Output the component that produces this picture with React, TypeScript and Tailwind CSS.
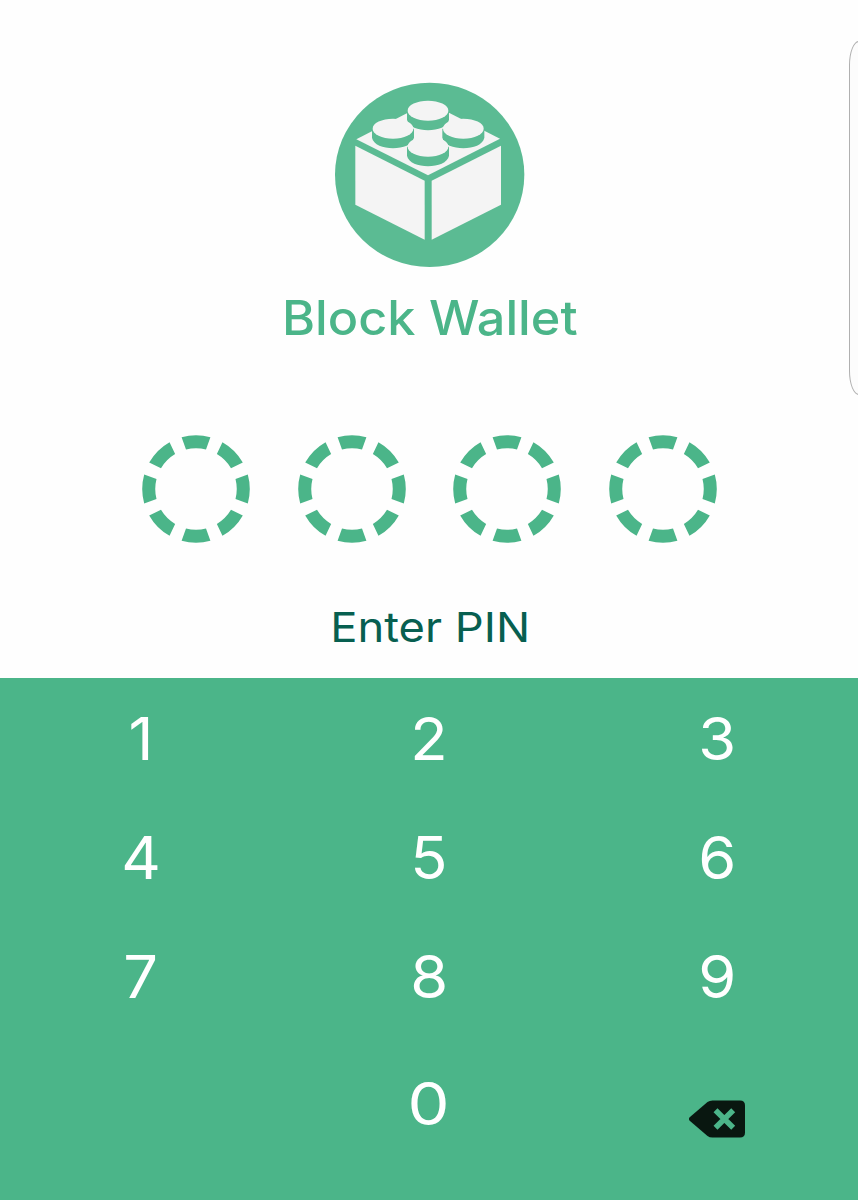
import type { ReactNode } from "react";

const PIN_LENGTH = 4;
const DASH_ANGLES = [0, 45, 90, 135, 180, 225, 270, 315];

/** Brick logo: 2x2 studs on a block, inside a green disc. */
function BrickLogo() {
  const studs = [
    { x: 309, y: 107 },
    { x: 204, y: 161 },
    { x: 415, y: 161 },
    { x: 309, y: 215 },
  ];
  return (
    <svg viewBox="0 0 630 600" className="ml-0.5 h-[200px] w-[210px]" role="img" aria-label="Block Wallet logo">
      <ellipse cx="314" cy="299.5" rx="284" ry="276.5" fill="#5bbb93" />
      <g fill="#f4f4f4">
        <path d="M310 82 L525 191 L309 301 L94 193Z" />
        <path d="M91 212 L299 317 V494 L91 389Z" />
        <path d="M528 212 L320 317 V494 L528 389Z" />
      </g>
      {studs.map(({ x, y }) => (
        <g key={`${x}-${y}`} transform={`translate(${x} ${y})`}>
          <path d="M-63 0 V27 C-55 69 55 69 63 27 V0Z" fill="#5bbb93" />
          <ellipse rx="61" ry="30" fill="#f4f4f4" />
        </g>
      ))}
      {/* top face shows between the back and front studs */}
      <path d="M267 168 Q309 178 351 168 V190 Q358 206 370 215 H248 Q262 206 267 190Z" fill="#f4f4f4" />
    </svg>
  );
}

function PinSlot() {
  return (
    <svg viewBox="-54 -54 108 108" className="size-[108px]" fill="#4bb589" aria-hidden>
      {DASH_ANGLES.map((angle) => (
        <path
          key={angle}
          d="M-14.4 -51.8 A53.8 53.8 0 0 1 14.4 -51.8 L10 -39.5 A40.7 40.7 0 0 0 -10 -39.5Z"
          transform={`rotate(${angle})`}
        />
      ))}
    </svg>
  );
}

function BackspaceIcon() {
  return (
    <svg viewBox="0 0 56 38" className="h-[38px] w-14" aria-hidden>
      <path
        d="M.7 17.3 L18.5 2.1 Q20.5 .4 23.5 .4 H51 Q56 .4 56 5.4 V32.6 Q56 37.6 51 37.6 H23.5 Q20.5 37.6 18.5 35.9 L.7 20.7 Q-.9 19 .7 17.3Z"
        fill="#091710"
      />
      <path d="M26.5 10.3 L44.2 27.7 M44.2 10.3 L26.5 27.7" stroke="#4bb589" strokeWidth="5.6" />
    </svg>
  );
}

function Key({ children }: { children: ReactNode }) {
  return (
    <button type="button" className="flex items-center justify-center text-[59px] leading-none text-white">
      {children}
    </button>
  );
}

export default function App() {
  return (
    <main className="relative flex h-[1200px] w-[858px] flex-col overflow-hidden bg-[#fefefe] font-['Inter',sans-serif]">
      <header className="flex flex-col items-center pt-[75px]">
        <BrickLogo />
        <h1 className="mt-[13px] ml-[2px] scale-x-[1.05] text-[48px] leading-[60px] font-medium whitespace-nowrap text-[#4bb589]">
          Block Wallet
        </h1>
      </header>

      <div className="mt-[87px] flex justify-center gap-[47.8px] pl-px">
        {Array.from({ length: PIN_LENGTH }, (_, i) => (
          <PinSlot key={i} />
        ))}
      </div>

      <p className="mt-[54px] scale-x-[1.105] pl-[2px] text-center text-[41px] leading-[60px] whitespace-nowrap text-[#075f50]">
        Enter PIN
      </p>

      <section className="mt-auto grid h-[522px] shrink-0 grid-cols-[288px_288px_288px] grid-rows-[119px_119px_119px_135px] justify-center bg-[#4bb589] pt-[1px]">
        {[1, 2, 3, 4, 5, 6, 7, 8, 9].map((n) => (
          <Key key={n}>
            <span className="scale-x-[1.04]">{n}</span>
          </Key>
        ))}
        <span />
        <Key>
          <span className="scale-x-[1.13]">0</span>
        </Key>
        <button type="button" aria-label="Delete" className="flex items-center justify-center pt-[31px]">
          <BackspaceIcon />
        </button>
      </section>

      {/* edge panel handle peeking in from the right */}
      <div
        aria-hidden
        className="absolute top-[41px] -right-5 h-[354px] w-[29px] rounded-[10px/24px] border border-[#b0b0b0] bg-[#fcfcfc]"
      />
    </main>
  );
}
